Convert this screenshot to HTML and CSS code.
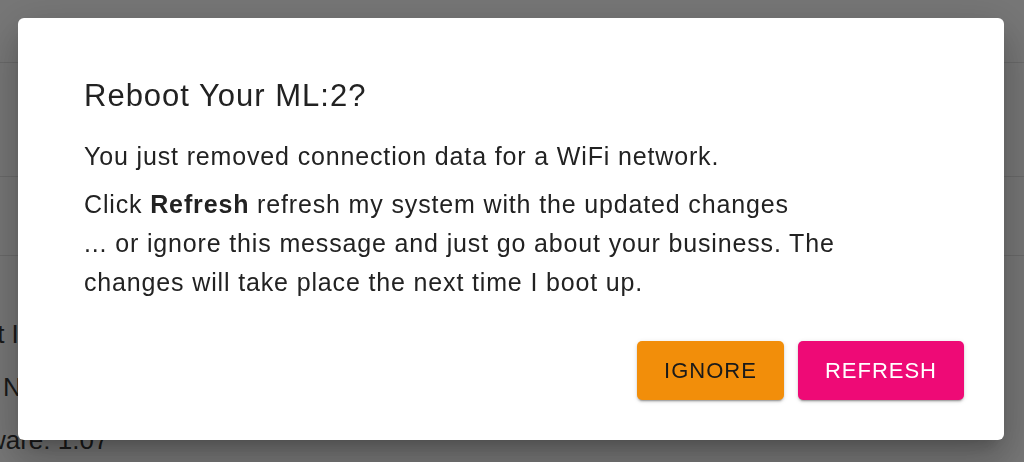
FILE: index.html
```html
<!DOCTYPE html>
<html lang="en">
<head>
  <meta charset="UTF-8" />
  <meta name="viewport" content="width=device-width, initial-scale=1.0" />
  <title>Reboot</title>
  <link rel="stylesheet" href="styles.css">
</head>
<body>
  <div class="page">
    <div class="page-bar"></div>
    <div class="page-row tall"></div>
    <div class="page-row"></div>
    <div class="info">
      <p>Robot IP: 192.168.1.40</p>
      <p>SSID Name: Home</p>
      <p>Firmware: 1.07</p>
    </div>
  </div>

  <div class="backdrop">
    <div class="dialog">
      <div class="dialog-content">
        <h2 class="dialog-title">Reboot Your ML:2?</h2>
        <p>You just removed connection data for a WiFi network.</p>
        <p>Click <b>Refresh</b> refresh my system with the updated changes<br>
          ... or ignore this message and just go about your business. The changes will take place the next time I boot up.</p>
      </div>
      <div class="dialog-actions">
        <button class="btn btn-ignore">Ignore</button>
        <button class="btn btn-refresh">Refresh</button>
      </div>
    </div>
  </div>
</body>
</html>
```

FILE: styles.css
```css
body {
  font-family: "Liberation Sans", Arial, sans-serif;
  margin: 0;
  background-color: #eeeeee;
  overflow: hidden;
}
.page {
  height: 100vh;
}
.page-bar {
  height: 62px;
  border-bottom: 1px solid #d4d4d4;
}
.page-row {
  height: 78px;
  border-bottom: 1px solid #d4d4d4;
}
.page-row.tall {
  height: 113px;
}
.info {
  margin-left: -65px;
  padding-top: 52px;
  color: #333;
  font-size: 26px;
}
.info p {
  margin: 0;
  line-height: 53px;
}
.backdrop {
  position: fixed;
  top: 0;
  left: 0;
  right: 0;
  bottom: 0;
  background: rgba(0, 0, 0, 0.5);
  display: flex;
  align-items: flex-start;
}
.dialog {
  margin: 18px 20px 0 18px;
  flex: 1;
  background: white;
  border-radius: 6px;
  padding: 60px 40px 40px 0;
  box-shadow: 0 11px 15px -7px rgba(0, 0, 0, 0.2), 0 24px 38px 3px rgba(0, 0, 0, 0.14), 0 9px 46px 8px rgba(0, 0, 0, 0.12);
}
.dialog-content {
  padding: 0 90px 0 66px;
  color: #222;
}
.dialog-title {
  margin: 0 0 23px 0;
  font-size: 31px;
  font-weight: normal;
  line-height: 36px;
  letter-spacing: 1px;
}
.dialog-content p {
  margin: 0 0 9px 0;
  font-size: 25px;
  line-height: 39px;
  letter-spacing: 0.85px;
}
.dialog-content b {
  font-weight: bold;
}
.dialog-actions {
  display: flex;
  justify-content: flex-end;
  gap: 14px;
  margin-top: 39px;
}
.btn {
  height: 59px;
  padding: 0 27px;
  border: none;
  border-radius: 5px;
  font-family: "Liberation Sans", Arial, sans-serif;
  font-size: 22px;
  letter-spacing: 1px;
  text-transform: uppercase;
  cursor: pointer;
  box-shadow: 0 3px 1px -2px rgba(0, 0, 0, 0.2), 0 2px 2px 0 rgba(0, 0, 0, 0.14), 0 1px 5px 0 rgba(0, 0, 0, 0.12);
}
.btn-ignore {
  background-color: #f28e0a;
  color: #1a1a1a;
}
.btn-refresh {
  background-color: #ee0a76;
  color: white;
}
```
